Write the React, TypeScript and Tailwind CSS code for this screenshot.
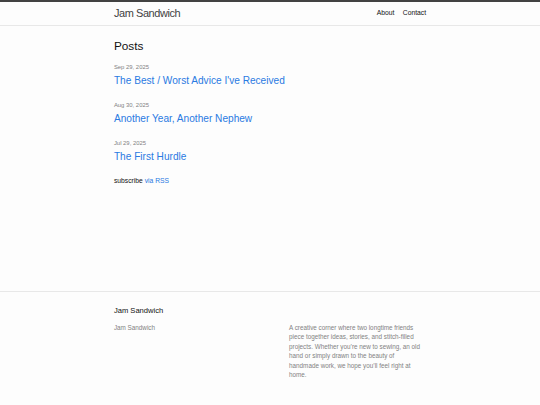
import React from "react";

const posts = [
  { date: "Sep 29, 2025", title: "The Best / Worst Advice I've Received" },
  { date: "Aug 30, 2025", title: "Another Year, Another Nephew" },
  { date: "Jul 29, 2025", title: "The First Hurdle" },
];

export default function App() {
  return (
    <div
      className="min-h-screen flex flex-col bg-[#fdfdfd] text-[#111111] text-[6.75px] leading-[1.5]"
      style={{ fontFamily: '"Liberation Sans", Arial, Helvetica, sans-serif' }}
    >
      <header className="border-t-[2.11px] border-t-[#424242] border-b-[0.42px] border-b-[#e8e8e8] min-h-[23.6px]">
        <div className="mx-auto w-[312.2px] flex justify-between items-start">
          <a className="text-[10.97px] font-light leading-[22.78px] tracking-[-0.42px] text-[#424242]">
            Jam Sandwich
          </a>
          <nav className="flex gap-[8.44px] leading-[22.78px]">
            <a className="text-[#111111]">About</a>
            <a className="text-[#111111]">Contact</a>
          </nav>
        </div>
      </header>

      <main className="flex-1 py-[12.66px]">
        <div className="mx-auto w-[312.2px]">
          <h2 className="text-[11.81px] leading-[1.5] mb-[6.33px]">Posts</h2>
          <ul className="mb-[12.66px]">
            {posts.map((p, i) => (
              <li key={i} className={i < posts.length - 1 ? "mb-[12.66px]" : ""}>
                <span className="text-[5.906px] text-[#828282] leading-[10.125px] block">
                  {p.date}
                </span>
                <h3>
                  <a className="block text-[10.125px] leading-[1.5] text-[#2a7ae2]">
                    {p.title}
                  </a>
                </h3>
              </li>
            ))}
          </ul>
          <p className="mb-[6.33px]">
            subscribe <a className="text-[#2a7ae2]">via RSS</a>
          </p>
        </div>
      </main>

      <footer className="border-t-[0.42px] border-t-[#e8e8e8] py-[12.66px]">
        <div className="mx-auto w-[312.2px]">
          <h2 className="text-[7.594px] leading-[1.5] mb-[6.33px]">Jam Sandwich</h2>
          <div className="flex ml-[-6.33px] text-[6.328px] leading-[1.5] text-[#828282]">
            <div className="w-[35%] pl-[6.33px] mb-[6.33px]">
              <ul>
                <li>Jam Sandwich</li>
              </ul>
            </div>
            <div className="w-[20%] pl-[6.33px] mb-[6.33px]"></div>
            <div className="w-[45%] pl-[6.33px] pr-[3px] mb-[6.33px]">
              <p className="mb-[6.33px]">
                A creative corner where two longtime friends piece together ideas, stories, and
                stitch-filled projects. Whether you’re new to sewing, an old hand or simply drawn
                to the beauty of handmade work, we hope you’ll feel right at home.
              </p>
            </div>
          </div>
        </div>
      </footer>
    </div>
  );
}
